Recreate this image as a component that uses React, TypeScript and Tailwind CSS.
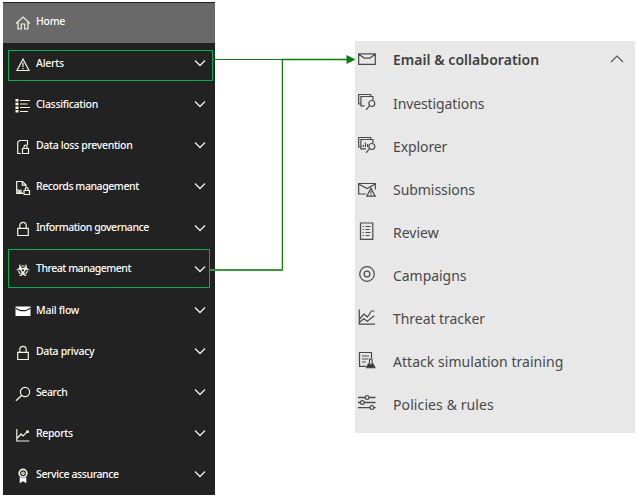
import type { ReactNode } from "react";
import { FaBiohazard } from "react-icons/fa";

type Item = { label: string; icon: ReactNode; tracking: string };

const navItems: Item[] = [
  {
    label: "Alerts",
    tracking: "tracking-[-0.22px]",
    icon: (
      <>
        <path d="M8 2 L14 13.5 H2 Z" />
        <path d="M8 5.5 V10 M8 11 V12.3" />
      </>
    ),
  },
  {
    label: "Classification",
    tracking: "tracking-[-0.3px]",
    icon: (
      <>
        <path d="M.5 1h3v2.6h-3z M.5 4.7h3v2.6h-3z M.5 8.4h3V11h-3z M.5 12h3v2.6h-3z" fill="#ffffd8" stroke="none" />
        <path d="M5 2.5h10M5 6h7.5M5 9.5h10M5 13.5h8" />
      </>
    ),
  },
  {
    label: "Data loss prevention",
    tracking: "tracking-[-0.34px]",
    icon: (
      <>
        <path d="M6 14.5H2.7V3L4.7 1.5h7.8V6" />
        <path d="M7.5 9.5h6v5h-6z M9 9.5V7.7a1.5 1.5 0 0 1 3 0V9.5" />
      </>
    ),
  },
  {
    label: "Records management",
    tracking: "tracking-[-0.43px]",
    icon: (
      <>
        <path d="M8 13.5H1.7V1.5h5.8l3.5 3.5v2 M7.3 1.5V5.2H11" />
        <path d="M3 9v4h5M4.5 10v3M6 9.5v3.5" />
        <path d="M9 10.5h5.5v4H9z M10.3 10.5V9a1.4 1.4 0 0 1 2.8 0v1.5" />
      </>
    ),
  },
  {
    label: "Information governance",
    tracking: "tracking-[-0.44px]",
    icon: <path d="M2.7 7.3h10.6v7.2H2.7z M4.8 7.3V4.5a3.2 3.2 0 0 1 6.4 0v2.8" />,
  },
  {
    label: "Threat management",
    tracking: "tracking-[-0.48px]",
    icon: <FaBiohazard x="1.2" y="1.2" size="13.5" fill="#f4f4e4" stroke="none" />,
  },
  {
    label: "Mail flow",
    tracking: "tracking-[-0.25px]",
    icon: (
      <>
        <path d="M.5 3.5h15v9.5H.5z" fill="#fff" stroke="none" />
        <path d="M.5 5.2l5 2.5h5l5-2.5" stroke="#222" />
      </>
    ),
  },
  {
    label: "Data privacy",
    tracking: "tracking-[-0.36px]",
    icon: <path d="M2.7 7.3h10.6v7.2H2.7z M4.8 7.3V4.5a3.2 3.2 0 0 1 6.4 0v2.8" />,
  },
  {
    label: "Search",
    tracking: "tracking-[-0.4px]",
    icon: (
      <>
        <circle cx="10" cy="6" r="4.6" />
        <path d="M6.8 9.2L1 14.8" strokeWidth="1.4" />
      </>
    ),
  },
  {
    label: "Reports",
    tracking: "tracking-[-0.35px]",
    icon: <path d="M1.8 2v12h12.5 M2.5 11l3.5-4 2 2 5-5 M11 4h2.3v2" />,
  },
  {
    label: "Service assurance",
    tracking: "tracking-[-0.39px]",
    icon: (
      <>
        <circle cx="8" cy="5.2" r="3.8" strokeWidth="1.7" />
        <circle cx="8" cy="5.2" r="1.2" />
        <path d="M4.7 9v6.3L8 13.2l3.3 2.1V9L8 10.3z" fill="#fff" stroke="none" />
      </>
    ),
  },
];

const panelItems: Item[] = [
  {
    label: "Investigations",
    tracking: "tracking-[-0.1px]",
    icon: (
      <>
        <path d="M3 11H.7V1.5h12V3 M6.5 12.8H2.9V3.5h12V7" />
        <circle cx="13.8" cy="10.5" r="3" />
        <path d="M11.6 12.7L8 16.8" />
      </>
    ),
  },
  {
    label: "Explorer",
    tracking: "tracking-[-0.1px]",
    icon: (
      <>
        <path d="M3 11H.7V1.5h12V3 M8 12.8H2.9V3.5h12V7" />
        <path d="M5.2 11V9 M7.4 11V6.5 M9.6 11V8" />
        <circle cx="13.8" cy="10.5" r="3" />
        <path d="M11.6 12.7L8 16.8" />
      </>
    ),
  },
  {
    label: "Submissions",
    tracking: "tracking-[-0.05px]",
    icon: (
      <>
        <path d="M8 15H.7V4.5h16.6v6 M.7 5l8.3 4.5L17.3 5" />
        <path d="M13 9.2l4.2 8H8.8z M13 12v2.5 M13 15.2v1" />
      </>
    ),
  },
  {
    label: "Review",
    tracking: "tracking-[0px]",
    icon: (
      <>
        <path d="M2.5 1h12.3v16.3H2.5z" />
        <path d="M4.5 4.5h1.3M7.5 4.5h5M4.5 7.5h1.3M7.5 7.5h4M4.5 10.5h1.3M7.5 10.5h5M4.5 13.5h1.3M7.5 13.5h4" />
      </>
    ),
  },
  {
    label: "Campaigns",
    tracking: "tracking-[-0.05px]",
    icon: (
      <>
        <circle cx="9" cy="9" r="7.3" />
        <circle cx="9" cy="9" r="2.9" />
      </>
    ),
  },
  {
    label: "Threat tracker",
    tracking: "tracking-[-0.05px]",
    icon: <path d="M1.3 1.5v14.7H17 M1.5 11l4.5-5 3.3 3 4.2-6h3 M1.5 14.2l4.3-3.5 3.5 2.5 7-5.5" />,
  },
  {
    label: "Attack simulation training",
    tracking: "tracking-[0.04px]",
    icon: (
      <>
        <path d="M8 15.3H1.5V1.5h12V7 M4 5h7M4 8h6M4 11h4" />
        <path d="M10.7 8h4 M11.5 8v3.5L9 16.5h7.5L14 11.5V8" />
        <path d="M10.2 13.3h5l1.6 3.4H8.6z" fill="#333" />
      </>
    ),
  },
  {
    label: "Policies & rules",
    tracking: "tracking-[0.1px]",
    icon: (
      <>
        <path d="M0 3.5h7.3 M11 3.5h6.5 M0 8.5h2.5 M6.2 8.5h11.3 M0 13.6h12 M15.7 13.6h2" strokeWidth="1.4" />
        <circle cx="9.1" cy="3.5" r="1.9" />
        <circle cx="4.3" cy="8.5" r="1.9" />
        <circle cx="13.9" cy="13.6" r="1.9" />
      </>
    ),
  },
];

function NavIcon({ children }: { children: ReactNode }) {
  return (
    <svg viewBox="0 0 16 16" className="mt-[3px] size-4 shrink-0" fill="none" stroke="#f4f4e4" strokeWidth="1.2">
      {children}
    </svg>
  );
}

function PanelIcon({ children }: { children: ReactNode }) {
  return (
    <svg viewBox="0 0 18 18" className="mb-1 size-[18px] shrink-0" fill="none" stroke="#4a4a4a" strokeWidth="1.2">
      {children}
    </svg>
  );
}

export default function App() {
  return (
    <div className="relative flex h-[498px] w-[639px] items-start overflow-hidden bg-white font-['Noto_Sans',sans-serif]">
      <nav className="mt-[2px] ml-[3px] h-[493px] w-[212px] border-t border-[#222] bg-[#222] text-[10.5px] font-medium text-white">
        <div className="flex h-10 items-center gap-[5px] bg-[#696969] pb-[3px] pl-3">
          <NavIcon>
            <path d="M1.2 8.5L8 2l6.8 6.5 M3 7v7h3.3V9h3.4v5H13V7" />
          </NavIcon>
          <span className="tracking-[-0.3px]">Home</span>
        </div>
        <ul>
          {navItems.map((item) => (
            <li key={item.label} className="flex h-[41.15px] items-center gap-[5px] pr-[9px] pb-px pl-3">
              <NavIcon>{item.icon}</NavIcon>
              <span className={`grow pt-px whitespace-nowrap ${item.tracking}`}>{item.label}</span>
              <svg viewBox="0 0 12 8" className="h-2 w-3" fill="none" stroke="#eee" strokeWidth="1.3">
                <path d="M1 1.5l5 5 5-5" />
              </svg>
            </li>
          ))}
        </ul>
      </nav>

      <section className="mt-[41px] ml-[140px] h-[392px] w-[280px] bg-[#e8e8e8] pl-[3px] text-[14px] text-[#484848]">
        <header className="flex h-9 items-center gap-[17px] pr-[11px]">
          <svg viewBox="0 0 18 18" className="size-[18px] shrink-0" fill="none" stroke="#4a4a4a" strokeWidth="1.2">
            <path d="M.7 3.8h16.6v10.5H.7z M.7 4.3l5.5 3.8h5.6l5.5-3.8" />
          </svg>
          <h2 className="grow font-semibold whitespace-nowrap tracking-[0.04px] text-[#404040]">Email &amp; collaboration</h2>
          <svg viewBox="0 0 14 8" className="h-2 w-3.5" fill="none" stroke="#555" strokeWidth="1.2">
            <path d="M1 7l6-6 6 6" />
          </svg>
        </header>
        <ul className="pt-[5px]">
          {panelItems.map((item) => (
            <li key={item.label} className="flex h-[43px] items-center gap-[17px]">
              <PanelIcon>{item.icon}</PanelIcon>
              <span className={`whitespace-nowrap ${item.tracking}`}>{item.label}</span>
            </li>
          ))}
        </ul>
      </section>

      {/* Highlight frames and the connector that joins them to the new section */}
      <div className="absolute top-[50px] left-[8px] h-[31px] w-[205px] border border-[#00b050]" />
      <div className="absolute top-[249px] left-[8px] h-[39px] w-[202px] border border-[#00b050]" />
      <svg className="absolute inset-0" width="639" height="498" fill="none" stroke="#107c10">
        <path d="M281 59.5H348" stroke="#c0dcc0" strokeWidth="3" />
        <path d="M281.5 61V269" stroke="#c0dcc0" />
        <path d="M213 59.5H348 M282.5 59V271" />
        <path d="M210 270H283" strokeWidth="2" stroke="#3a963a" />
        <path d="M346.5 55l9 4.5-9 4.5z" fill="#107c10" stroke="none" />
      </svg>
    </div>
  );
}
